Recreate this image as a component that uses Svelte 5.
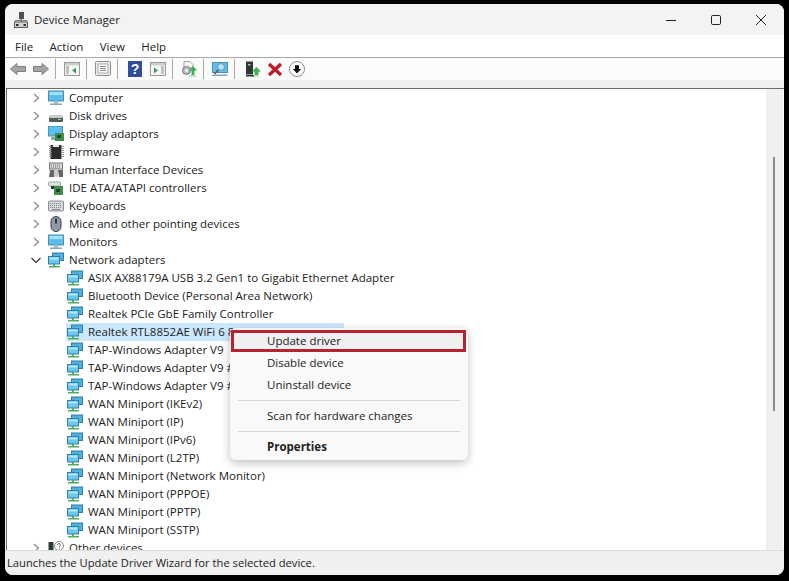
<script>
  const cats = [
    { label: 'Computer', icon: 'monitor' },
    { label: 'Disk drives', icon: 'disk' },
    { label: 'Display adaptors', icon: 'display' },
    { label: 'Firmware', icon: 'chip' },
    { label: 'Human Interface Devices', icon: 'hid' },
    { label: 'IDE ATA/ATAPI controllers', icon: 'ide' },
    { label: 'Keyboards', icon: 'keyboard' },
    { label: 'Mice and other pointing devices', icon: 'mouse' },
    { label: 'Monitors', icon: 'monitor' },
    { label: 'Network adapters', icon: 'net', open: true },
    { label: 'ASIX AX88179A USB 3.2 Gen1 to Gigabit Ethernet Adapter', icon: 'net', child: true },
    { label: 'Bluetooth Device (Personal Area Network)', icon: 'net', child: true },
    { label: 'Realtek PCIe GbE Family Controller', icon: 'net', child: true },
    { label: 'Realtek RTL8852AE WiFi 6 802.11ax PCIe Adapter', icon: 'net', child: true, selected: true },
    { label: 'TAP-Windows Adapter V9', icon: 'net', child: true },
    { label: 'TAP-Windows Adapter V9 #2', icon: 'net', child: true },
    { label: 'TAP-Windows Adapter V9 #3', icon: 'net', child: true },
    { label: 'WAN Miniport (IKEv2)', icon: 'net', child: true },
    { label: 'WAN Miniport (IP)', icon: 'net', child: true },
    { label: 'WAN Miniport (IPv6)', icon: 'net', child: true },
    { label: 'WAN Miniport (L2TP)', icon: 'net', child: true },
    { label: 'WAN Miniport (Network Monitor)', icon: 'net', child: true },
    { label: 'WAN Miniport (PPPOE)', icon: 'net', child: true },
    { label: 'WAN Miniport (PPTP)', icon: 'net', child: true },
    { label: 'WAN Miniport (SSTP)', icon: 'net', child: true },
    { label: 'Other devices', icon: 'other' }
  ];
</script>

{#snippet treeIcon(kind)}
  <svg class="ticon" viewBox="0 0 16 16" width="16" height="16">
    {#if kind === 'monitor'}
      <rect x="0.5" y="1" width="15" height="10" fill="#5cc0ee" stroke="#4a8fb5"/>
      <rect x="1.5" y="2" width="13" height="3" fill="#a6e0f8"/>
      <rect x="6" y="11.5" width="4" height="2" fill="#9fb4c0"/>
      <rect x="2" y="13.5" width="12" height="1.5" fill="#8aa5b5"/>
    {:else if kind === 'disk'}
      <rect x="1" y="8" width="14" height="6" rx="1" fill="#55595c"/>
      <rect x="1" y="7" width="14" height="3" rx="1" fill="#c9cccf"/>
      <rect x="10" y="11" width="3" height="1" fill="#8fe08f"/>
    {:else if kind === 'display'}
      <rect x="0.5" y="0" width="14" height="10" fill="#5cc0ee" stroke="#4a8fb5"/>
      <rect x="7" y="7" width="9" height="8" fill="#3f8f4a"/>
      <rect x="9" y="9" width="4" height="3" fill="#24452a"/>
      <rect x="3" y="11" width="4" height="3" fill="#8aa5b5"/>
    {:else if kind === 'chip'}
      <rect x="2.5" y="1" width="11" height="14" fill="#2b2b2b"/>
      <path d="M1 2.5h15M1 4.5h15M1 6.5h15M1 8.5h15M1 10.5h15M1 12.5h15" stroke="#9a9a9a" stroke-width="1" stroke-dasharray="2.5 10.5"/>
      <rect x="5" y="1" width="6" height="2" fill="#e8e8e8"/>
    {:else if kind === 'hid'}
      <rect x="1.5" y="1" width="13" height="6" fill="#d8dade" stroke="#777"/>
      <path d="M3 3h10M3 5h10" stroke="#666" stroke-dasharray="1 1"/>
      <path d="M2 8h4v7H1zM10 8h5v7h-4z" fill="#666"/>
      <path d="M7 8v7M9 8v7" stroke="#999" stroke-width="1"/>
    {:else if kind === 'ide'}
      <rect x="0.5" y="2" width="12" height="4" rx="1" fill="#dfe3e3" stroke="#9aa"/>
      <rect x="3" y="6" width="3" height="3" fill="#333"/>
      <rect x="6" y="6" width="9" height="9" fill="#3f8f4a"/>
      <rect x="8" y="9" width="4" height="3" fill="#24452a"/>
    {:else if kind === 'keyboard'}
      <rect x="0.5" y="3" width="15" height="10" rx="1" fill="#d9dadd" stroke="#8a8d92"/>
      <path d="M2 5.5h12M2 7.5h12M2 9.5h12" stroke="#7d7f85" stroke-dasharray="1 1"/>
      <rect x="4" y="11" width="8" height="1" fill="#8a8d92"/>
    {:else if kind === 'mouse'}
      <rect x="3" y="0.5" width="10" height="15" rx="5" fill="#8e99a5" stroke="#3b3f46"/>
      <rect x="7" y="2.5" width="2" height="5" fill="#2e3238"/>
    {:else if kind === 'net'}
      <rect x="4.5" y="1" width="11" height="7.5" fill="#4fb1df" stroke="#2f7fa8"/>
      <rect x="0.5" y="4.5" width="11" height="7.5" fill="#6cc6ee" stroke="#2f7fa8"/>
      <rect x="1.5" y="5.5" width="9" height="2" fill="#b3e4f8"/>
      <rect x="5" y="12" width="2" height="2" fill="#4fae5a"/>
      <rect x="1" y="14" width="11" height="1.5" fill="#4fae5a"/>
    {:else}
      <rect x="0.5" y="2" width="5" height="13" fill="#2f3a36"/>
      <circle cx="11" cy="6" r="4.5" fill="#fff" stroke="#888"/>
      <path d="M9.5 5a1.5 1.5 0 1 1 2 1.4V7.5M11.5 8.5v1" fill="none" stroke="#666"/>
    {/if}
  </svg>
{/snippet}

<div class="screen">
  <div class="window">
    <header class="titlebar">
      <svg class="appicon" viewBox="0 0 14 16" width="14" height="16">
        <rect x="5" y="0" width="5" height="7" fill="#4a4f52"/>
        <rect x="6.5" y="7" width="1.5" height="3" fill="#777"/>
        <rect x="0.5" y="10" width="13" height="5.5" fill="#d6d3c8" stroke="#5c5c5c"/>
        <rect x="2" y="12" width="2.5" height="2" fill="#2c2c2c"/>
        <rect x="9.5" y="12" width="2.5" height="2" fill="#2c2c2c"/>
        <path d="M1.5 10V8.5h11V10" fill="none" stroke="#777"/>
      </svg>
      <span class="title">Device Manager</span>
      <div class="controls">
        <svg viewBox="0 0 10 10" width="10" height="10"><path d="M0 5.5h10" stroke="#222" stroke-width="1"/></svg>
        <svg viewBox="0 0 10 10" width="10" height="10"><rect x="0.5" y="0.5" width="9" height="9" rx="1.2" fill="none" stroke="#222"/></svg>
        <svg viewBox="0 0 10 10" width="10" height="10"><path d="M0 0l10 10M10 0L0 10" stroke="#222"/></svg>
      </div>
    </header>

    <nav class="menubar">
      <span>File</span><span>Action</span><span>View</span><span>Help</span>
    </nav>

    <div class="toolbar">
      <svg class="tool tight" viewBox="0 0 16 16" width="16" height="16"><path d="M0.5 8L7 2.5V5.5H15.5V10.5H7V13.5Z" fill="#a3a5a6" stroke="#7c7e80"/></svg>
      <svg class="tool" viewBox="0 0 16 16" width="16" height="16"><path d="M15.5 8L9 2.5V5.5H0.5V10.5H9V13.5Z" fill="#a3a5a6" stroke="#7c7e80"/></svg>
      <i class="sep"></i>
      <svg class="tool" viewBox="0 0 16 16" width="16" height="16"><rect x="0.5" y="1.5" width="15" height="13" fill="#f6f6f6" stroke="#9a9a9a"/><rect x="1" y="2" width="14" height="2.5" fill="#c4d4c4"/><path d="M2 6h3M2 8h3M2 10h3M2 12h3" stroke="#888"/><path d="M12 6.5v6L8 9.5z" fill="#3f9a6a"/></svg>
      <i class="sep"></i>
      <svg class="tool" viewBox="0 0 16 16" width="16" height="16"><rect x="0.5" y="0.5" width="15" height="14" rx="1" fill="#ececec" stroke="#8f8f8f"/><rect x="3" y="3" width="10" height="9" fill="#fff" stroke="#aaa"/><path d="M5 5.5h6M5 7.5h6M5 9.5h6" stroke="#888"/></svg>
      <i class="sep"></i>
      <svg class="tool help" viewBox="0 0 14 16" width="14" height="16"><rect width="14" height="16" fill="#2f4f9e"/><text x="7" y="13" text-anchor="middle" class="q">?</text></svg>
      <svg class="tool" viewBox="0 0 16 16" width="16" height="16"><rect x="0.5" y="1.5" width="15" height="13" fill="#f6f6f6" stroke="#9a9a9a"/><rect x="1" y="2" width="14" height="2.5" fill="#c4d4c4"/><path d="M11 6h3M11 8h3M11 10h3M11 12h3" stroke="#888"/><path d="M4 6.5v6L8 9.5z" fill="#3f9a6a"/></svg>
      <i class="sep"></i>
      <svg class="tool" viewBox="0 0 16 16" width="16" height="16"><path d="M3 0.5h6l3 3V7H3z" fill="#f2f2f2" stroke="#a5a5a5"/><circle cx="5.5" cy="9.5" r="4" fill="#b8bcbf" stroke="#77797c"/><circle cx="5.5" cy="9.5" r="1.5" fill="#f2f2f2"/><path d="M12 5l4 4.5h-2.5V14h-3V9.5H8z" fill="#3fae56"/><rect x="8" y="14.5" width="7" height="1" fill="#7fcf8e"/></svg>
      <i class="sep"></i>
      <svg class="tool" viewBox="0 0 16 16" width="16" height="16"><rect x="0.5" y="1.5" width="15" height="10" fill="#5cc0ee" stroke="#4a8fb5"/><circle cx="9" cy="6" r="3.5" fill="#b7e2f5" stroke="#6f8fa3"/><path d="M6.5 8.5L2.5 13" stroke="#555" stroke-width="1.4"/><rect x="0.5" y="13.5" width="15" height="1.5" fill="#86a5b8"/></svg>
      <i class="sep wide"></i>
      <svg class="tool" viewBox="0 0 16 16" width="16" height="16"><rect x="1" y="0.5" width="7" height="13" fill="#2f3a36"/><rect x="3" y="3" width="2.5" height="1.5" fill="#b8c0bc"/><rect x="1" y="14" width="8" height="1.5" fill="#2f3a36"/><path d="M11.5 6l4.5 4.5h-2.5V14h-4v-3.5H7z" fill="#3fae56"/><rect x="9" y="14.5" width="5" height="1" fill="#7fcf8e"/></svg>
      <svg class="tool" viewBox="0 0 16 16" width="16" height="16"><path d="M2 3l12 11M14 3L2 14" stroke="#bd1e2c" stroke-width="3.4"/></svg>
      <svg class="tool" viewBox="0 0 16 16" width="16" height="16"><circle cx="8" cy="8" r="7.5" fill="#fff" stroke="#8d8d8d"/><path d="M8 12.5L3.8 8H6V4.2h4V8h2.2z" fill="#111"/></svg>
    </div>

    <div class="treewrap">
      <ul class="tree">
        {#each cats as c}
          <li class="row" class:child={c.child} class:selected={c.selected}>
            {#if !c.child}
              <svg class="chev" viewBox="0 0 10 10" width="10" height="10">
                {#if c.open}
                  <path d="M0.5 3L5 7.5 9.5 3" fill="none" stroke="#333" stroke-width="1.2"/>
                {:else}
                  <path d="M3 1l4.5 4L3 9" fill="none" stroke="#8a8a8a" stroke-width="1.2"/>
                {/if}
              </svg>
            {/if}
            {@render treeIcon(c.icon)}
            <span class="label">{c.label}</span>
          </li>
        {/each}
      </ul>
      <div class="scrollbar"><div class="thumb"></div></div>

      <div class="ctx">
        <div class="item hover">Update driver</div>
        <div class="item">Disable device</div>
        <div class="item">Uninstall device</div>
        <hr />
        <div class="item">Scan for hardware changes</div>
        <hr />
        <div class="item bold">Properties</div>
      </div>
    </div>

    <footer class="status">Launches the Update Driver Wizard for the selected device.</footer>
  </div>
</div>

<style>
  :global(body) { margin: 0; background: #000; }
  .screen {
    width: 789px; height: 581px; box-sizing: border-box;
    padding: 4px 5px 6px 5px; background: #000;
    font: 11.5px "Open Sans", "Noto Sans", sans-serif; color: #222;
  }
  .window {
    width: 779px; height: 571px; display: flex; flex-direction: column;
    border-radius: 8px; overflow: hidden; background: #f0f0f0;
  }
  .titlebar {
    height: 31px; flex: none; display: flex; align-items: center;
    padding-left: 9px; background: #f3f3f3;
  }
  .appicon { margin-right: 6px; }
  .controls { margin-left: auto; display: flex; gap: 35px; padding-right: 18px; }
  .menubar {
    height: 22px; flex: none; display: flex; align-items: center; gap: 16.4px;
    padding-left: 10px; background: #fff;
    border-bottom: 1px solid #a8a8a8;
  }
  .toolbar {
    height: 22px; flex: none; display: flex; align-items: center; gap: 6px;
    padding-left: 5px; background: #fbfbfb;
  }
  .tool { flex: none; }
  .tool.tight { margin-right: 1px; }
  .tool.help { margin-left: 2px; margin-right: 2px; }
  .sep { width: 1px; height: 20px; background: #a9a9a9; margin-right: 2px; flex: none; }
  .sep.wide { margin-right: 4px; }
  .q { font: bold 14px "Liberation Sans", sans-serif; fill: #fff; }
  .treewrap {
    position: relative; flex: 1; min-height: 0; margin: 8px 0 0 1px;
    display: flex; background: #fff;
    border-top: 1px solid #6b6b6b; border-left: 1px solid #6b6b6b;
  }
  .tree { flex: 1; margin: 0; padding: 0; list-style: none; overflow: hidden; }
  .row {
    height: 18px; display: flex; align-items: center;
    padding-left: 24px; box-sizing: border-box; white-space: nowrap;
  }
  .label { position: relative; top: -1px; }
  .chev { margin-right: 7px; flex: none; }
  .ticon { margin-right: 5px; flex: none; }
  .row.child { padding-left: 60px; }
  .selected { background: linear-gradient(#cce8ff, #cce8ff) 59px 0 / 278px 100% no-repeat; }
  .scrollbar { width: 17px; flex: none; background: #f0f0f0; margin-right: 1px; }
  .thumb { width: 2px; height: 254px; margin: 68px 0 0 7px; background: #8b8b8b; }
  .ctx {
    position: absolute; left: 223px; top: 239px; width: 238px; height: 132px;
    box-sizing: border-box; padding-top: 2px;
    background: #f9f9f9; border-radius: 6px;
    box-shadow: 0 3px 10px rgba(0, 0, 0, 0.25);
  }
  .item { height: 22px; line-height: 21px; padding-left: 37px; }
  .item.hover {
    margin: 0 2px 0 1px; padding-left: 33px; box-sizing: border-box;
    background: #f0f0f0; border: 3px solid #b8222f; line-height: 15px;
  }
  .item.bold { font-weight: 700; }
  hr { margin: 4px 8px; border: 0; border-top: 1px solid #d5d5d5; }
  .status {
    height: 23px; flex: none; display: flex; align-items: center; font-size: 11.2px;
    padding: 0 0 1px 2px; background: #f0f0f0; border-top: 1px solid #dcdcdc;
  }
</style>
